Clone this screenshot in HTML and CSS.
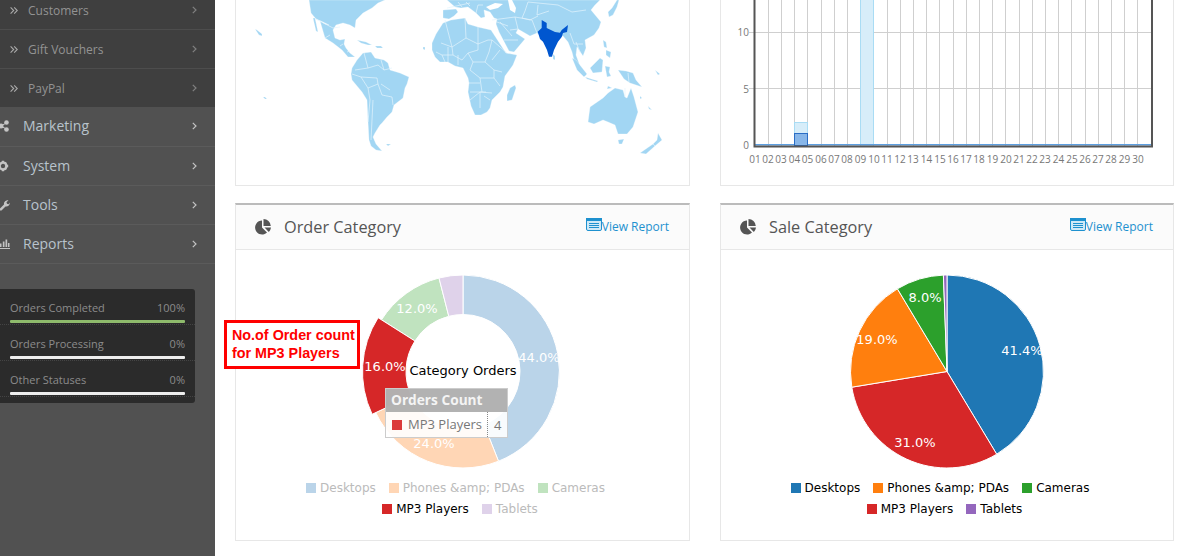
FILE: index.html
```html
<!DOCTYPE html>
<html lang="en">
<head>
<meta charset="utf-8">
<title>Dashboard</title>
<link rel="stylesheet" href="styles.css">
</head>
<body>
<aside class="sidebar">
  <ul class="menu">
    <li class="row sub"><svg class="dbl" viewBox="0 0 8 7"><path d="M.6 .4 3.700 3.500 .6 6.600M4.200 .4 7.300 3.500 4.200 6.600"/></svg><span class="sub-label">Customers</span><svg class="chev" viewBox="0 0 5 8"><path d="M.8 .8 4 4 .8 7.200"/></svg></li>
    <li class="row sub"><svg class="dbl" viewBox="0 0 8 7"><path d="M.6 .4 3.700 3.500 .6 6.600M4.200 .4 7.300 3.500 4.200 6.600"/></svg><span class="sub-label">Gift Vouchers</span><svg class="chev" viewBox="0 0 5 8"><path d="M.8 .8 4 4 .8 7.200"/></svg></li>
    <li class="row sub sub-last"><svg class="dbl" viewBox="0 0 8 7"><path d="M.6 .4 3.700 3.500 .6 6.600M4.200 .4 7.300 3.500 4.200 6.600"/></svg><span class="sub-label">PayPal</span><svg class="chev" viewBox="0 0 5 8"><path d="M.8 .8 4 4 .8 7.200"/></svg></li>
    <li class="row top top-first"><svg class="ico" viewBox="0 0 10 12"><path d="M1 6 7 2.500M1 6 7 9.500" class="ico-line"/><circle cx="1" cy="6" r="2.500"/><circle cx="6.500" cy="2.500" r="2.300"/><circle cx="6.500" cy="9.500" r="2.300"/></svg><span class="top-label">Marketing</span><svg class="chev" viewBox="0 0 5 8"><path d="M.8 .8 4 4 .8 7.200"/></svg></li>
    <li class="row top"><svg class="ico" viewBox="0 0 10 12"><circle cx="3" cy="6" r="3.400" class="gear"/><path d="M1.800 .8h2.400v2h-2.400zM1.800 9.200h2.400v2h-2.400zM6 4.800h2.200v2.400H6zM5.200 1.800l1.700 1.200-1.200 1.700L4 3.500zM5.200 10.200l1.700-1.200-1.200-1.700L4 8.500z"/></svg><span class="top-label">System</span><svg class="chev" viewBox="0 0 5 8"><path d="M.8 .8 4 4 .8 7.200"/></svg></li>
    <li class="row top"><svg class="ico" viewBox="0 0 10 12"><path d="M0 9.500 4 5.500C3.600 3.500 5 1 8.500 1.200L6.500 3.200 7 4.800 8.600 5.200 9.800 3.500C10 6.500 7.500 8 5.500 7.500L1.500 11.500 0 11.500z"/></svg><span class="top-label">Tools</span><svg class="chev" viewBox="0 0 5 8"><path d="M.8 .8 4 4 .8 7.200"/></svg></li>
    <li class="row top"><svg class="ico" viewBox="0 0 10 12"><path d="M0 10h10v1H0zM0 5.500h1.500V9H0zM2.800 3.500h1.700V9H2.800zM5.500 1.500h1.700V9H5.500zM8 5h1.500v4H8z"/></svg><span class="top-label">Reports</span><svg class="chev" viewBox="0 0 5 8"><path d="M.8 .8 4 4 .8 7.200"/></svg></li>
  </ul>
  <section class="stats">
    <div class="stat"><div class="stat-head"><span>Orders Completed</span><span>100%</span></div><div class="stat-bar done"></div></div>
    <div class="stat"><div class="stat-head"><span>Orders Processing</span><span>0%</span></div><div class="stat-bar"></div></div>
    <div class="stat"><div class="stat-head"><span>Other Statuses</span><span>0%</span></div><div class="stat-bar"></div></div>
  </section>
</aside>

<main class="main">
  <section class="panel panel-open">
    <svg class="fig" viewBox="236 0 453 185" width="453" height="185" role="img" aria-label="World map">
      <g class="land">
        <path d="M309 0 311 13 316 19 323 22 329 25 325 24 320 21 325 38 333 43 342 50 348 57 355 57 350 53 346 48 344 44 345 39 340 40 335 38 333 30 336 25 343 23 350 25 355 28 356 20 363 13 372 8 378 3 385 0z"/>
        <path d="M313 18 315 18 318 32 316 31z"/>
        <path d="M357 40 366 42 372 45 368 45 361 43zM375 46 381 46 383 48 377 48z"/>
        <path d="M363 53 371 52 375 58 384 60 388 63 390 70 400 73 409 77 407 84 405 88 403 98 394 105 392 112 387 117 382 123 380 125 375 133 373 137 376 144 382 151 376 150 371 146 369 140 368 122 367 100 362 92 352 80 351 74 352 68 357 60z"/>
        <path d="M432 43 436 34 443 23 451 20 465 18 468 24 478 27 491 30 506 53 517 55 513 65 505 76 503 87 500 92 492 100 490 108 487 112 481 115 475 115 471 106 468 92 469 83 468 78 463 68 455 66 448 62 440 62 435 57 432 50z"/>
        <path d="M515 85 516 88 512 100 507 101 507 95 510 88z"/>
        <path d="M443 10 456 9 458 12 454 16 449 19 443 18z"/>
        <path d="M447 0 455 7 461 8 468 7 476 13 481 18 485 17 484 10 490 12 494 18 497 19 496 24 499 32 509 51 514 52 525 39 516 33 518 29 530 36 537 33 548 42 563 36 568 42 572 52 574 60 578 66 585 76 586 75 580 66 576 55 577 47 583 56 586 48 585 40 594 35 599 28 601 22 596 16 591 10 595 5 600 0z"/>
        <path d="M572 58 576 60 587 74 584 77 577 70z"/>
        <path d="M585 77 598 81 597 82 587 79z"/>
        <path d="M590 68 600 58 603 60 602 72 593 73z"/>
        <path d="M603 40 606 42 607 48 604 47zM606 50 611 52 610 58 606 55z"/>
        <path d="M605 66 610 67 609 72 611 76 607 77z"/>
        <path d="M618 70 626 71 633 73 636 80 642 87 636 85 630 83 624 79z"/>
        <path d="M608 12 612 8 617 0 619 0 617 7 613 15 609 17z"/>
        <path d="M588 122 590 107 603 98 608 93 615 88 623 90 625 97 627 98 631 88 634 97 638 112 633 127 627 134 618 134 615 125 608 122 603 120 594 124z"/>
        <path d="M618 140 624 139 622 144 619 144z"/>
        <path d="M658 133 662 140 655 146 653 144 657 140zM653 144 655 146 646 154 640 153z"/>
        <path d="M553 54 555 56 555 60 553 59zM255 29 257 30 262 34 262 36 259 35zM263 97 265 97 267 99 265 99zM423 47 425 47 425 50 423 49zM386 144 391 144 388 146zM640 96 642 98 640 99zM655 70 660 74 658 75zM608 86 612 88 607 89zM648 106 652 110 649 109z"/>
      </g>
      <path class="india" d="M541.700 20 546.700 23 546.700 28 555 32 560 32.700 561.700 30 568 25 567 32 563 33 561.700 37 558 41.700 554 50 552 56.700 549 56.700 547 50 543 41.700 540 39 537.700 31.700 541.700 28z"/>
      <g class="borders">
        <path d="M316 19 333 28 340 27M325 38 330 35M340 46 343 44M347 52 350 51"/>
        <path d="M364 53 368 68 355 70M368 68 378 65 384 70 381 60M384 70 392 68M352 74 361 77 368 88 370 100M368 88 378 84 382 95 392 97 393 105M381 84 390 90M370 100 368 122M378 84 377 78 361 77M373 100 371 140"/>
        <path d="M441 43 452 47 466 38 478 44 488 40 492 40 507 53M466 38 465 18M478 44 478 27M452 47 453 55 442 55 436 52M453 55 462 60 468 53 478 50 478 44M468 53 473 62 485 62 489 52 492 40M485 62 494 70 502 72M473 62 470 70 480 78 482 92M469 83 480 83M480 78 494 78 500 86M494 70 494 78M470 100 480 92 492 93M480 92 480 108M490 100 484 96M442 55 445 62M458 55 458 65M448 47 448 62M445 20 452 47M500 50 492 60M470 92 486 92"/>
        <path d="M447 8 470 3M476 13 478 5 483 5M492 20 515 17 532 20M500 22 512 36M515 17 518 29M532 20 537 33M525 11 528 2 558 5 572 12 586 10M537 15 549 11M570 33 574 44 583 44M576 42 580 52M497 22 508 26M510 30 518 29M504 40 518 40M458 2 462 7M466 2 470 6M525 11 522 18 530 20M538 5 537 15M530 20 538 16"/>
        <path d="M625 97 625 88M628 73 629 82"/>
      </g>
      <path class="sea" d="M486 7 495 3 503 4 498 8 490 10zM508 0 512 0 516 8 515 13 510 10z"/>
    </svg>
  </section>

  <section class="panel panel-open">
    <svg class="fig" viewBox="721 0 452 185" width="452" height="185" role="img" aria-label="Bar chart">
      <path class="grid" d="M768.500 0V146M781.500 0V146M794.500 0V146M807.500 0V146M821.500 0V146M834.500 0V146M847.500 0V146M860.500 0V146M873.500 0V146M887.500 0V146M900.500 0V146M913.500 0V146M926.500 0V146M939.500 0V146M953.500 0V146M966.500 0V146M979.500 0V146M992.500 0V146M1005.500 0V146M1019.500 0V146M1032.500 0V146M1045.500 0V146M1058.500 0V146M1071.500 0V146M1085.500 0V146M1098.500 0V146M1111.500 0V146M1124.500 0V146M1137.500 0V146M749 32.500H1152M749 88.500H1152"/>
      <rect class="bar-light" x="794.500" y="122.500" width="13" height="23"/>
      <rect class="bar-light" x="860.500" y="-5" width="13" height="150"/>
      <path class="base-blue" d="M755 144.800H1152"/>
      <rect class="bar-dark" x="794.500" y="133.500" width="13" height="12"/>
      <path class="frame" d="M754.500 0V146.500H1152V0"/>
      <g class="ylab"><text x="749" y="36">10</text><text x="749" y="93">5</text><text x="749" y="149">0</text></g>
      <g class="xlab"><text x="755" y="163">01</text><text x="768" y="163">02</text><text x="781" y="163">03</text><text x="794.500" y="163">04</text><text x="807.500" y="163">05</text><text x="821" y="163">06</text><text x="834" y="163">07</text><text x="847" y="163">08</text><text x="860.500" y="163">09</text><text x="874" y="163">10</text><text x="887" y="163">11</text><text x="900" y="163">12</text><text x="913" y="163">13</text><text x="926.500" y="163">14</text><text x="940" y="163">15</text><text x="953" y="163">16</text><text x="966" y="163">17</text><text x="979" y="163">18</text><text x="992.500" y="163">19</text><text x="1006" y="163">20</text><text x="1019" y="163">21</text><text x="1032" y="163">22</text><text x="1045" y="163">23</text><text x="1058.500" y="163">24</text><text x="1072" y="163">25</text><text x="1085" y="163">26</text><text x="1098" y="163">27</text><text x="1111" y="163">28</text><text x="1124.500" y="163">29</text><text x="1138" y="163">30</text></g>
    </svg>
  </section>

  <section class="panel panel-full">
    <header class="panel-head">
      <svg class="pie-ico" viewBox="0 0 16 16"><path d="M7 1.500V8.500L12 13.500A7 7 0 1 1 7 1.500Z"/><path d="M8.500 0A7.500 7.500 0 0 1 15.800 7H8.500Z"/><path d="M9.500 8.500H16A7.600 7.600 0 0 1 13.800 13Z"/></svg>
      <h2 class="panel-title">Order Category</h2>
      <a class="report"><svg class="rep-ico" viewBox="0 0 16 13"><rect x=".5" y=".5" width="15" height="12" rx="1.500" class="rep-box"/><path d="M0 0h16v3H0zM3 5h10v1H3zM3 7h10v1H3zM3 9h10v1H3z"/></svg>View Report</a>
    </header>
    <div class="panel-body">
      <svg class="fig" viewBox="236 250 453 227" width="453" height="227" role="img" aria-label="Order Category donut chart">
        <g class="slices">
          <path fill="#bad4e9" d="M463 275A96.500 96.500 0 0 1 498.500 461.200L484 424.500A57 57 0 0 0 463 314.500Z"/>
          <path fill="#ffd6b5" d="M498.500 461.200A96.500 96.500 0 0 1 375.700 412.600L411.400 395.800A57 57 0 0 0 484 424.500Z"/>
          <path fill="#c0e3bf" d="M381.500 319.800A96.500 96.500 0 0 1 439 278L448.800 316.300A57 57 0 0 0 414.900 341Z"/>
          <path fill="#dfd2ea" d="M439 278A96.500 96.500 0 0 1 463 275V314.500A57 57 0 0 0 448.800 316.300Z"/>
          <path fill="#d62728" d="M372.100 414.300A100.500 100.500 0 0 1 378.100 317.700L414.900 341A57 57 0 0 0 411.400 395.800Z"/>
        </g>
        <g class="pct"><text x="539" y="362">44.0%</text><text x="434" y="448">24.0%</text><text x="385" y="371">16.0%</text><text x="417" y="313">12.0%</text></g>
        <text class="centre" x="463" y="375">Category Orders</text>
      </svg>
      <div class="tip">
        <div class="tip-head">Orders Count</div>
        <div class="tip-body"><i class="tip-swatch"></i><span class="tip-name">MP3 Players</span><span class="tip-val">4</span></div>
      </div>
      <div class="legend first-row">
        <span class="key off"><i class="c1-f"></i>Desktops</span><span class="key off"><i class="c2-f"></i>Phones &amp;amp; PDAs</span><span class="key off"><i class="c3-f"></i>Cameras</span>
      </div>
      <div class="legend second-row">
        <span class="key"><i class="c4"></i>MP3 Players</span><span class="key off"><i class="c5-f"></i>Tablets</span>
      </div>
    </div>
  </section>

  <section class="panel panel-full">
    <header class="panel-head">
      <svg class="pie-ico" viewBox="0 0 16 16"><path d="M7 1.500V8.500L12 13.500A7 7 0 1 1 7 1.500Z"/><path d="M8.500 0A7.500 7.500 0 0 1 15.800 7H8.500Z"/><path d="M9.500 8.500H16A7.600 7.600 0 0 1 13.800 13Z"/></svg>
      <h2 class="panel-title">Sale Category</h2>
      <a class="report"><svg class="rep-ico" viewBox="0 0 16 13"><rect x=".5" y=".5" width="15" height="12" rx="1.500" class="rep-box"/><path d="M0 0h16v3H0zM3 5h10v1H3zM3 7h10v1H3zM3 9h10v1H3z"/></svg>View Report</a>
    </header>
    <div class="panel-body">
      <svg class="fig" viewBox="721 250 452 227" width="452" height="227" role="img" aria-label="Sale Category pie chart">
        <g class="slices pie">
          <path fill="#1f77b4" d="M947 371.500V275A96.500 96.500 0 0 1 996.700 454.200Z"/>
          <path fill="#d62728" d="M947 371.500 996.700 454.200A96.500 96.500 0 0 1 851.800 387.200Z"/>
          <path fill="#ff7f0e" d="M947 371.500 851.800 387.200A96.500 96.500 0 0 1 897.400 288.800Z"/>
          <path fill="#2ca02c" d="M947 371.500 897.400 288.800A96.500 96.500 0 0 1 943.400 275.100Z"/>
          <path fill="#9467bd" d="M947 371.500 943.400 275.100A96.500 96.500 0 0 1 947 275Z"/>
        </g>
        <g class="pct"><text x="1022" y="355">41.4%</text><text x="915" y="447">31.0%</text><text x="877" y="344">19.0%</text><text x="925" y="302">8.0%</text></g>
      </svg>
      <div class="legend first-row">
        <span class="key"><i class="c1"></i>Desktops</span><span class="key"><i class="c2"></i>Phones &amp;amp; PDAs</span><span class="key"><i class="c3"></i>Cameras</span>
      </div>
      <div class="legend second-row">
        <span class="key"><i class="c4"></i>MP3 Players</span><span class="key"><i class="c5"></i>Tablets</span>
      </div>
    </div>
  </section>

  <div class="note">No.of Order count<br>for MP3 Players</div>
</main>
</body>
</html>
```
FILE: styles.css
```css
* { box-sizing: border-box; }
html, body { margin: 0; height: 556px; overflow: hidden; background: #fff; }
body { display: flex; font-family: "Open Sans", sans-serif; }

.sidebar { width: 215px; flex: none; height: 556px; background: #515151; overflow: hidden; }
.menu { list-style: none; margin: -9px 0 0; padding: 0; }
.row { height: 39px; display: flex; align-items: center; border-bottom: 1px solid #5b5b5b; }
.row.sub { background: #3f3f3f; border-bottom-color: #4d4d4d; }
.row.sub-last { height: 38px; border-bottom: 0; }
.row.top { padding-bottom: 1px; }
.row.top-first { height: 40px; padding-bottom: 2px; }
.dbl { width: 8px; height: 7px; margin-left: 10px; flex: none; fill: none; stroke: #aaa; stroke-width: 1.1; }
.sub-label { margin-left: 10px; font-size: 12px; color: #939393; flex: 1; }
.ico { width: 10px; height: 12px; flex: none; fill: #c4c4c4; }
.ico-line { stroke: #c4c4c4; stroke-width: 1; fill: none; }
.gear { fill: none; stroke: #c4c4c4; stroke-width: 2.4; }
.top-label { margin-left: 13px; font-size: 14px; color: #b8c3cc; flex: 1; }
.chev { width: 5px; height: 8px; margin-right: 18px; flex: none; fill: none; stroke: #c4c4c4; stroke-width: 1.2; }
.row.sub .chev { stroke: #808080; }

.stats { width: 195px; margin-top: 25px; padding-bottom: 6px; background: #2b2b2b; border-radius: 0 3px 3px 0; }
.stat { height: 36px; padding: 11px 10px 0; border-bottom: 1px dotted #444; }
.stat-head { display: flex; justify-content: space-between; font-size: 11px; line-height: 15px; color: #8c8c8c; }
.stat-bar { height: 3px; margin-top: 5px; background: #eee; border-radius: 1px; }
.stat-bar.done { background: #8fbb6c; }

.main { position: relative; flex: 1; display: grid; grid-template-columns: 455px 454px; grid-template-rows: 186px 338px; gap: 17px 30px; padding-left: 20px; align-content: start; }
.panel { background: #fff; border: 1px solid #e7e7e7; }
.panel-open { border-top: 0; }
.panel-full { border-top: 2px solid #bbb; }
.fig { display: block; }
.land { fill: #a2d6f3; stroke: #fff; stroke-width: .3; }
.india { fill: #0056cf; }
.borders { fill: none; stroke: #e4f3fc; stroke-width: .7; }
.sea { fill: #fff; }
.grid { fill: none; stroke: #cfcfcf; stroke-width: 1; }
.bar-light { fill: #d7edf9; stroke: #a9dcf4; stroke-width: 1; }
.bar-dark { fill: #87b6e9; stroke: #2a6dc5; stroke-width: 1; }
.base-blue { stroke: #5e9fe0; stroke-width: 1.5; fill: none; }
.frame { fill: none; stroke: #555; stroke-width: 2; }
.ylab text { font: 10px "Open Sans", sans-serif; fill: #777; text-anchor: end; }
.xlab text { font: 10px "Open Sans", sans-serif; fill: #777; text-anchor: middle; }

.panel-head { height: 45px; display: flex; align-items: center; background: #fbfbfb; border-bottom: 1px solid #e7e7e7; padding: 0 20px 0 19px; }
.pie-ico { width: 16px; height: 16px; flex: none; fill: #555; }
.panel-title { flex: 1; margin: 0 0 0 13px; font-size: 16.3px; font-weight: 400; color: #555; }
.report { display: flex; align-items: center; font-size: 12px; color: #1e91cf; margin-top: -2px; }
.rep-ico { width: 16px; height: 13px; fill: #1e91cf; margin-top: -3px; }
.rep-box { fill: #cfe9f7; stroke: #1e91cf; }

.panel-body { position: relative; }
.slices path { stroke: #fff; stroke-width: 1; }
.pct text { font: 13px "DejaVu Sans", sans-serif; fill: #fff; text-anchor: middle; }
.centre { font: 13px "DejaVu Sans", sans-serif; fill: #000; text-anchor: middle; }

.tip { position: absolute; left: 149px; top: 138px; width: 123px; border: 1px solid #ccc; background: rgba(255,255,255,.9); }
.tip-head { height: 23px; padding-left: 5px; background: rgba(165,165,165,.85); font-size: 13.7px; font-weight: 700; line-height: 22px; color: #f4f4f4; }
.tip-body { display: flex; align-items: center; height: 25px; font-size: 13px; color: #777; }
.tip-swatch { width: 10px; height: 10px; margin-left: 6px; background: #db3a3b; }
.tip-name { margin-left: 6px; width: 80px; line-height: 25px; border-right: 1px dotted #888; white-space: nowrap; }
.tip-val { margin-left: 6px; }

.legend { display: flex; justify-content: center; height: 21px; align-items: center; gap: 13px; font: 12px "DejaVu Sans", sans-serif; color: #000; }
.key { display: flex; align-items: center; gap: 4px; white-space: nowrap; }
.key i { width: 10px; height: 10px; }
.key.off { color: #bbb; }
.first-row { padding-right: 14px; }
.second-row { padding-right: 5px; }
.c1 { background: #1f77b4; }
.c2 { background: #ff7f0e; }
.c3 { background: #2ca02c; }
.c4 { background: #d62728; }
.c5 { background: #9467bd; }
.c1-f { background: #bad4e9; }
.c2-f { background: #ffd6b5; }
.c3-f { background: #c0e3bf; }
.c5-f { background: #dfd2ea; }

.note { position: absolute; left: 9px; top: 320px; width: 136px; height: 49px; padding: 3px 0 0 5px; background: #fff; border: 3px solid #f00; font: 700 14.35px/18px "Liberation Sans", sans-serif; color: #f00; white-space: nowrap; }
```
